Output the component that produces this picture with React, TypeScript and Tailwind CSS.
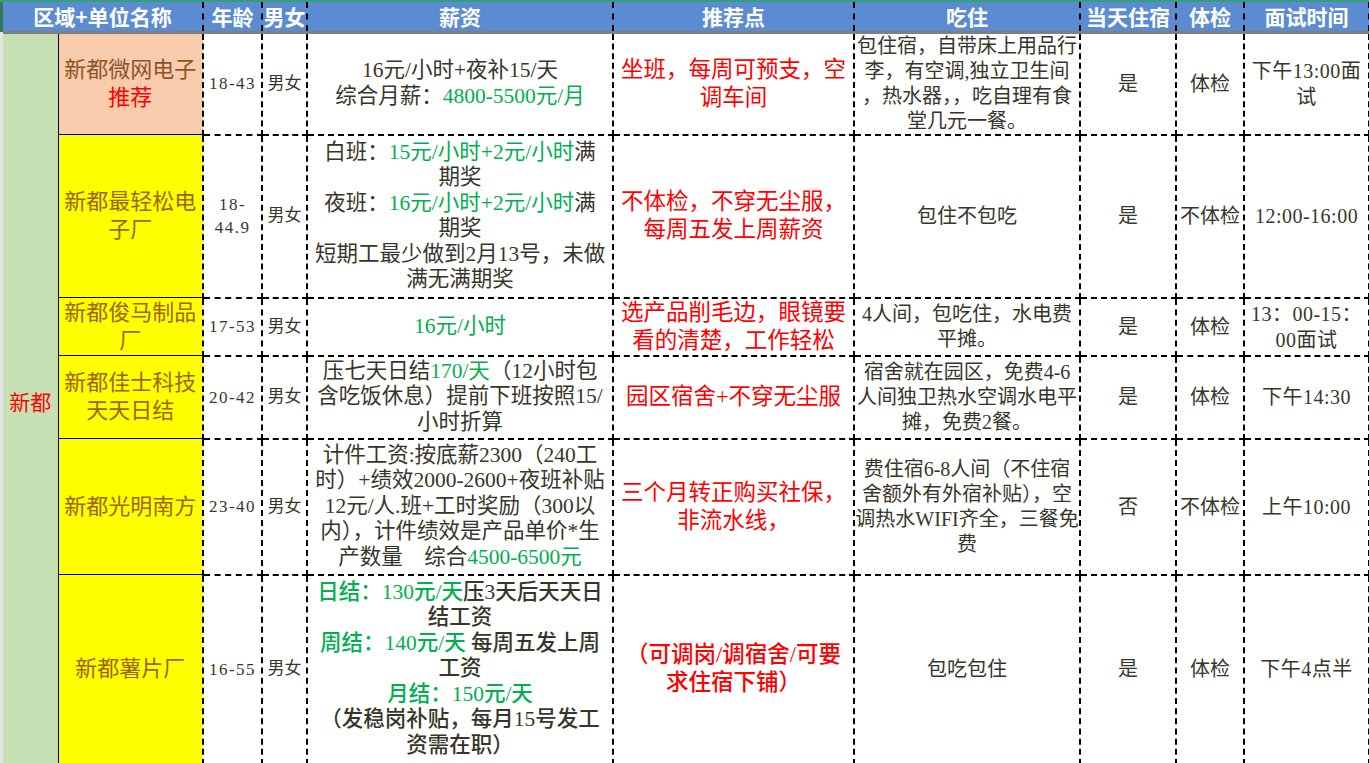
import type { ReactNode } from "react";

const font = "font-['Liberation_Serif','Noto_Sans_CJK_SC',serif]";

function G({ children }: { children: ReactNode }) {
  return <span className="text-[#00b050]">{children}</span>;
}

function Lines({ lines, className = "" }: { lines: ReactNode[]; className?: string }) {
  return (
    <div className={className}>
      {lines.map((l, i) => (
        <div key={i} className="whitespace-nowrap">
          {l}
        </div>
      ))}
    </div>
  );
}

const cell = "border-2 border-dashed border-black p-0 text-center align-middle";
const th =
  "border-x-2 border-b-[3px] border-t-0 border-x-black border-b-[#7f7f7f] [border-left-style:dashed] [border-right-style:dashed] [border-bottom-style:solid] p-0 text-center align-middle";
const nameCell =
  "border border-black border-r-2 [border-right-style:dashed] p-0 text-center align-middle text-[22px] leading-[28px]";

type Row = {
  h: string;
  nameBg: string;
  name: ReactNode[];
  age: ReactNode[];
  salary: ReactNode[];
  rec: ReactNode[];
  food: ReactNode[];
  same: string;
  exam: string;
  time: ReactNode[];
  bold?: boolean;
};

const rows: Row[] = [
  {
    h: "h-[100px]",
    nameBg: "bg-[#f8cbad] text-[#8c5526]",
    name: ["新都微网电子", <span className="text-[#ff0000]">推荐</span>],
    age: ["18-43"],
    salary: ["16元/小时+夜补15/天", <>综合月薪：<G>4800-5500元/月</G></>],
    rec: ["坐班，每周可预支，空", "调车间"],
    food: ["包住宿，自带床上用品行", "李，有空调,独立卫生间", "，热水器，，吃自理有食", "堂几元一餐。"],
    same: "是",
    exam: "体检",
    time: ["下午13:00面", "试"],
  },
  {
    h: "h-[163px]",
    nameBg: "bg-[#ffff00] text-[#9c6500]",
    name: ["新都最轻松电", "子厂"],
    age: ["18-", "44.9"],
    salary: [
      <>白班：<G>15元/小时+2元/小时</G>满</>,
      "期奖",
      <>夜班：<G>16元/小时+2元/小时</G>满</>,
      "期奖",
      "短期工最少做到2月13号，未做",
      "满无满期奖",
    ],
    rec: ["不体检，不穿无尘服，", "每周五发上周薪资"],
    food: ["包住不包吃"],
    same: "是",
    exam: "不体检",
    time: ["12:00-16:00"],
  },
  {
    h: "h-[58px]",
    nameBg: "bg-[#ffff00] text-[#9c6500]",
    name: ["新都俊马制品", "厂"],
    age: ["17-53"],
    salary: [<G>16元/小时</G>],
    rec: ["选产品削毛边，眼镜要", "看的清楚，工作轻松"],
    food: ["4人间，包吃住，水电费", "平摊。"],
    same: "是",
    exam: "体检",
    time: ["13：00-15：", "00面试"],
  },
  {
    h: "h-[83px]",
    nameBg: "bg-[#ffff00] text-[#9c6500]",
    name: ["新都佳士科技", "天天日结"],
    age: ["20-42"],
    salary: [<>压七天日结<G>170/天</G>（12小时包</>, "含吃饭休息）提前下班按照15/", "小时折算"],
    rec: ["园区宿舍+不穿无尘服"],
    food: ["宿舍就在园区，免费4-6", "人间独卫热水空调水电平", "摊，免费2餐。"],
    same: "是",
    exam: "体检",
    time: ["下午14:30"],
  },
  {
    h: "h-[136px]",
    nameBg: "bg-[#ffff00] text-[#9c6500]",
    name: ["新都光明南方"],
    age: ["23-40"],
    salary: [
      "计件工资:按底薪2300（240工",
      "时）+绩效2000-2600+夜班补贴",
      "12元/人.班+工时奖励（300以",
      "内），计件绩效是产品单价*生",
      <>产数量　综合<G>4500-6500元</G></>,
    ],
    rec: ["三个月转正购买社保，", "非流水线，"],
    food: ["费住宿6-8人间（不住宿", "舍额外有外宿补贴），空", "调热水WIFI齐全，三餐免", "费"],
    same: "否",
    exam: "不体检",
    time: ["上午10:00"],
  },
  {
    h: "h-[189px]",
    nameBg: "bg-[#ffff00] text-[#9c6500]",
    name: ["新都薯片厂"],
    age: ["16-55"],
    salary: [
      <><G>日结：130元/天</G>压3天后天天日</>,
      "结工资",
      <><G>周结：140元/天</G> 每周五发上周</>,
      "工资",
      <G>月结：150元/天</G>,
      "（发稳岗补贴，每月15号发工",
      "资需在职）",
    ],
    rec: ["（可调岗/调宿舍/可要", "求住宿下铺）"],
    food: ["包吃包住"],
    same: "是",
    exam: "体检",
    time: ["下午4点半"],
    bold: true,
  },
];

export default function App() {
  return (
    <div className={`h-[763px] w-[1369px] overflow-hidden bg-white ${font}`}>
      <div className="flex border-t-2 border-[#33a077]">
        {/* row header strip */}
        <div className="flex w-[3px] shrink-0 flex-col">
          <div className="h-[30px] bg-[#2e7a57]" />
          <div className="flex-1 bg-[#e4e4e4]" />
        </div>

        <table className="w-[1366px] table-fixed border-collapse text-[#37362a]">
          <colgroup>
            <col className="w-[55px]" />
            <col className="w-[145px]" />
            <col className="w-[59px]" />
            <col className="w-[45px]" />
            <col className="w-[306px]" />
            <col className="w-[241px]" />
            <col className="w-[226px]" />
            <col className="w-[96px]" />
            <col className="w-[68px]" />
            <col className="w-[125px]" />
          </colgroup>
          <thead>
            <tr className="h-[30px] bg-[#5b8cd2] font-['Noto_Sans_CJK_SC',sans-serif] text-[21px] font-bold leading-[26px] text-white">
              <th colSpan={2} className={`${th} [border-left-style:none]`}>区域+单位名称</th>
              <th className={th}>年龄</th>
              <th className={th}>男女</th>
              <th className={th}>薪资</th>
              <th className={th}>推荐点</th>
              <th className={th}>吃住</th>
              <th className={`${th} whitespace-nowrap`}>当天住宿</th>
              <th className={th}>体检</th>
              <th className={th}>面试时间</th>
            </tr>
          </thead>
          <tbody>
            {rows.map((r, i) => (
              <tr key={i} className={r.h}>
                {i === 0 && (
                  <td
                    rowSpan={7}
                    className="border-r border-black bg-[#c6e0b4] p-0 text-center align-middle text-[21px] text-[#ff0000]"
                  >
                    新都
                  </td>
                )}
                <td className={`${nameCell} ${r.nameBg}`}>
                  <Lines lines={r.name} />
                </td>
                <td className={`${cell} text-[17px] leading-[23px] tracking-[1.5px]`}>
                  <Lines lines={r.age} />
                </td>
                <td className={`${cell} text-[17px]`}>男女</td>
                <td className={`${cell} text-[21.5px] leading-[25.5px] ${r.bold ? "font-medium" : ""}`}>
                  <Lines lines={r.salary} />
                </td>
                <td className={`${cell} text-[22.5px] leading-[28px] text-[#ff0000] ${r.bold ? "font-medium" : ""}`}>
                  <Lines lines={r.rec} />
                </td>
                <td className={`${cell} text-[20px] leading-[25px]`}>
                  <Lines lines={r.food} />
                </td>
                <td className={`${cell} text-[20px]`}>{r.same}</td>
                <td className={`${cell} text-[20px]`}>{r.exam}</td>
                <td className={`${cell} text-[20px] leading-[26px] tracking-[0.5px]`}>
                  <Lines lines={r.time} />
                </td>
              </tr>
            ))}
            <tr className="h-[10px]">
              <td className={`${nameCell} bg-[#ffff00]`} />
              <td className={cell} />
              <td className={cell} />
              <td className={cell} />
              <td className={cell} />
              <td className={cell} />
              <td className={cell} />
              <td className={cell} />
              <td className={cell} />
            </tr>
          </tbody>
        </table>
      </div>
    </div>
  );
}
